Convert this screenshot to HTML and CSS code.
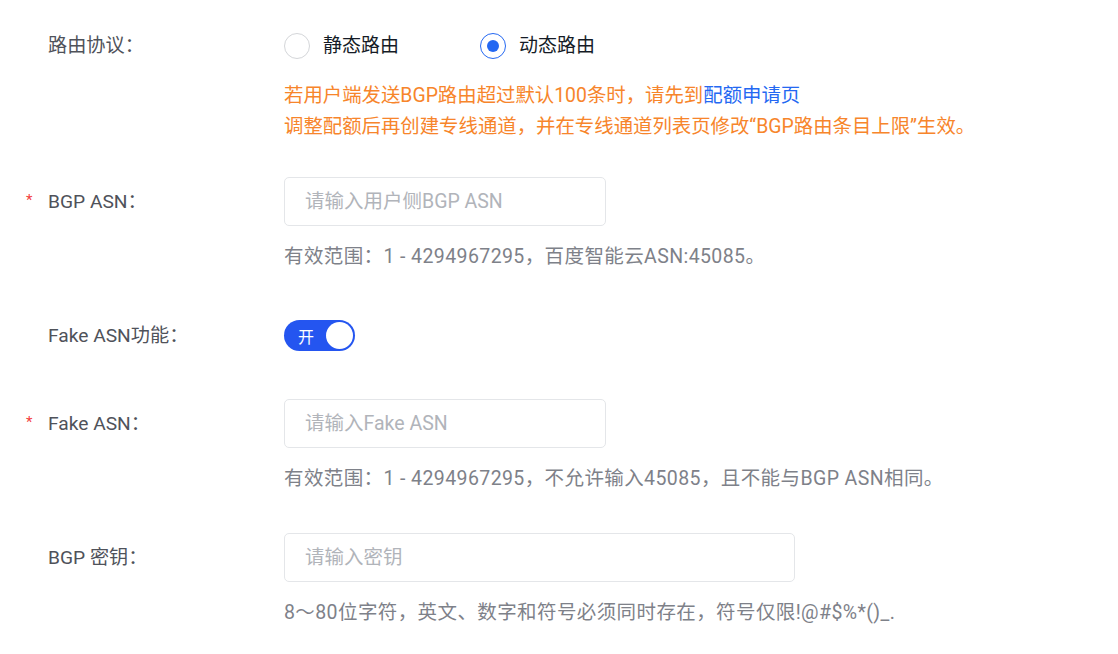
FILE: index.html
```html
<!DOCTYPE html>
<html lang="zh-CN">
<head>
<meta charset="utf-8">
<title>BGP 配置</title>
<link rel="stylesheet" href="styles.css">
</head>
<body>
<form class="form">
  <div class="item item-first">
    <div class="label"><span class="req"></span>路由协议：</div>
    <div class="content">
      <div class="control">
        <label class="radio"><span class="radio-dot"></span><span class="radio-text">静态路由</span></label>
        <label class="radio radio-checked"><span class="radio-dot"></span><span class="radio-text">动态路由</span></label>
      </div>
      <div class="warn">若用户端发送BGP路由超过默认100条时，请先到<a class="link" href="#">配额申请页</a><br>调整配额后再创建专线通道，并在专线通道列表页修改“BGP路由条目上限”生效。</div>
    </div>
  </div>

  <div class="item">
    <div class="label"><span class="req">*</span>BGP ASN：</div>
    <div class="content">
      <div class="control"><input class="input" type="text" placeholder="请输入用户侧BGP ASN"></div>
      <div class="help">有效范围：1 - 4294967295，百度智能云ASN:45085。</div>
    </div>
  </div>

  <div class="item">
    <div class="label"><span class="req"></span>Fake ASN功能：</div>
    <div class="content">
      <div class="control"><span class="switch"><span class="switch-text">开</span><span class="switch-knob"></span></span></div>
    </div>
  </div>

  <div class="item">
    <div class="label"><span class="req">*</span>Fake ASN：</div>
    <div class="content">
      <div class="control"><input class="input" type="text" placeholder="请输入Fake ASN"></div>
      <div class="help">有效范围：1 - 4294967295，不允许输入45085，且不能与BGP ASN相同。</div>
    </div>
  </div>

  <div class="item">
    <div class="label"><span class="req"></span>BGP 密钥：</div>
    <div class="content">
      <div class="control"><input class="input input-wide" type="text" placeholder="请输入密钥"></div>
      <div class="help">8～80位字符，英文、数字和符号必须同时存在，符号仅限!@#$%*()_.</div>
    </div>
  </div>
</form>
</body>
</html>
```

FILE: styles.css
```css
* { box-sizing: border-box; }
html, body { margin: 0; background: #fff; }
body {
  font-family: "Roboto", "Noto Sans CJK SC", sans-serif;
  font-size: 19.5px;
  color: #151b26;
}
.form {
  padding-top: 21px;
}
.item {
  display: flex;
  align-items: flex-start;
  margin-bottom: 39px;
}
.item-first { margin-bottom: 35px; }
.label {
  width: 284px;
  flex: none;
  height: 49px;
  display: flex;
  align-items: center;
  padding-left: 26px;
  color: #4f525a;
  font-size: 19.2px;
  line-height: 1;
}
.req {
  display: inline-block;
  width: 22px;
  color: #f33e3e;
  font-size: 15px;
  position: relative;
  top: -1px;
}
.content { display: flex; flex-direction: column; }
.control {
  height: 49px;
  display: flex;
  align-items: center;
}
.radio {
  display: flex;
  align-items: center;
  margin-right: 81px;
  cursor: pointer;
}
.radio-dot {
  width: 26px;
  height: 26px;
  border-radius: 50%;
  border: 1px solid #d4d6d9;
  margin-right: 13px;
  display: flex;
  align-items: center;
  justify-content: center;
}
.radio-checked .radio-dot { border-color: #2468f2; }
.radio-checked .radio-dot::after {
  content: "";
  width: 12px;
  height: 12px;
  border-radius: 50%;
  background: #2468f2;
}
.radio-text { font-size: 19px; color: #151b26; line-height: 1; }
.warn {
  margin-top: 10px;
  color: #f7852b;
  line-height: 31px;
  font-size: 19.4px;
}
.link { color: #2468f2; text-decoration: none; }
.input {
  width: 322px;
  height: 49px;
  border: 1px solid #e4e6e9;
  border-radius: 5px;
  padding: 0 20px;
  font-family: inherit;
  font-size: 19.5px;
  color: #151b26;
  outline: none;
}
.input-wide { width: 511px; }
.input::placeholder { color: #b1b4ba; }
.help {
  margin-top: 15px;
  line-height: 31px;
  color: #7e8189;
  font-size: 19.5px;
  letter-spacing: 0.4px;
}
.switch {
  width: 71px;
  height: 31px;
  border-radius: 16px;
  background: #2455f0;
  display: flex;
  align-items: center;
  justify-content: space-between;
  padding: 0 2px 0 14px;
}
.switch-text { color: #fff; font-size: 16px; }
.switch-knob {
  width: 27px;
  height: 27px;
  border-radius: 50%;
  background: #fff;
}
```
